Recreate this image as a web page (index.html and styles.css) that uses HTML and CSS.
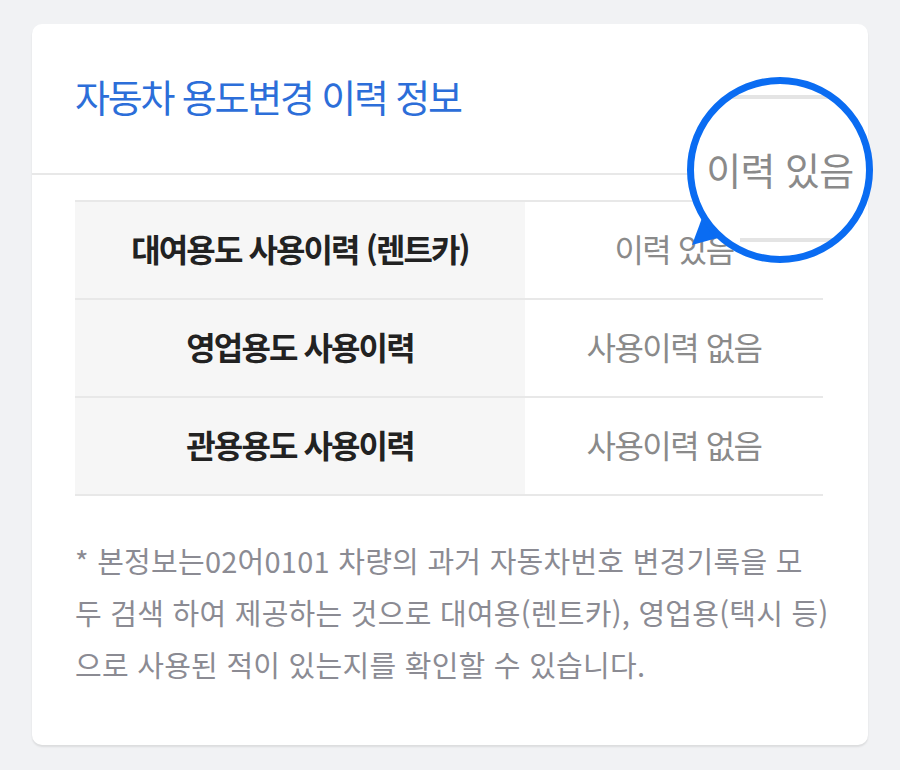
FILE: index.html
```html
<!DOCTYPE html>
<html lang="ko">
<head>
<meta charset="utf-8">
<title>자동차 용도변경 이력 정보</title>
<link rel="stylesheet" href="styles.css">
</head>
<body>
<section class="card">
  <header class="card-head">
    <h2 class="title">자동차 용도변경 이력 정보</h2>
  </header>
  <div class="table">
    <div class="row">
      <div class="label">대여용도 사용이력 (렌트카)</div>
      <div class="value">이력 있음</div>
    </div>
    <div class="row">
      <div class="label">영업용도 사용이력</div>
      <div class="value">사용이력 없음</div>
    </div>
    <div class="row">
      <div class="label">관용용도 사용이력</div>
      <div class="value">사용이력 없음</div>
    </div>
  </div>
  <p class="notes">* 본정보는02어0101 차량의 과거 자동차번호 변경기록을 모<br>두 검색 하여 제공하는 것으로 대여용(렌트카), 영업용(택시 등)<br>으로 사용된 적이 있는지를 확인할 수 있습니다.</p>

  <div class="magnifier">
    <svg class="mag-svg" width="200" height="200" viewBox="0 0 200 200">
      <defs>
        <clipPath id="lens"><circle cx="100" cy="100" r="88"/></clipPath>
      </defs>
      <circle cx="100" cy="100" r="89" fill="#ffffff"/>
      <g clip-path="url(#lens)">
        <rect x="0" y="25" width="200" height="4" fill="#e4e4e4"/>
        <rect x="60" y="168" width="140" height="4" fill="#e4e4e4"/>
      </g>
      <polygon points="12,175 22,148 41,167" fill="#0a6cf2"/>
      <circle cx="100" cy="100" r="89.5" fill="none" stroke="#0a6cf2" stroke-width="7"/>
    </svg>
    <div class="mag-text">이력 있음</div>
  </div>
</section>
</body>
</html>
```

FILE: styles.css
```css
html, body {
  margin: 0;
  padding: 0;
}
body {
  background: #f1f2f4;
  font-family: "Noto Sans CJK KR", "Noto Sans", sans-serif;
  width: 900px;
  height: 770px;
  overflow: hidden;
}
.card {
  position: relative;
  margin: 24px 32px 0 32px;
  height: 721px;
  background: #ffffff;
  border-radius: 10px;
  box-shadow: 0 2px 2px rgba(0, 0, 0, 0.09);
  box-sizing: border-box;
}
.card-head {
  padding: 49px 43px 54px 43px;
  border-bottom: 2px solid #e8e8e8;
}
.title {
  margin: 0;
  font-size: 38px;
  line-height: 46px;
  font-weight: 400;
  letter-spacing: -2.2px;
  color: #2c6ed9;
}
.table {
  margin: 25px 45px 0 43px;
  border-top: 2px solid #e8e8e8;
}
.row {
  display: grid;
  grid-template-columns: 450px 1fr;
  height: 96px;
  border-bottom: 2px solid #e8e8e8;
}
.label {
  background: #f6f6f6;
  display: flex;
  align-items: center;
  justify-content: center;
  padding-bottom: 4px;
  font-size: 32px;
  font-weight: 700;
  letter-spacing: -1.9px;
  color: #222222;
}
.value {
  display: flex;
  align-items: center;
  justify-content: center;
  padding-bottom: 4px;
  font-size: 32px;
  font-weight: 400;
  letter-spacing: -1.5px;
  color: #8a8a8a;
}
.notes {
  margin: 38px 0 0 43px;
  font-size: 29px;
  line-height: 52px;
  letter-spacing: 0.25px;
  color: #8b8b93;
  white-space: nowrap;
}
.magnifier {
  position: absolute;
  left: 648px;
  top: 46px;
  width: 200px;
  height: 200px;
}
.mag-svg {
  display: block;
}
.mag-text {
  position: absolute;
  left: 0;
  top: 0;
  width: 200px;
  height: 196px;
  display: flex;
  align-items: center;
  justify-content: center;
  font-size: 38px;
  letter-spacing: -0.6px;
  color: #8a8a8a;
}
```
